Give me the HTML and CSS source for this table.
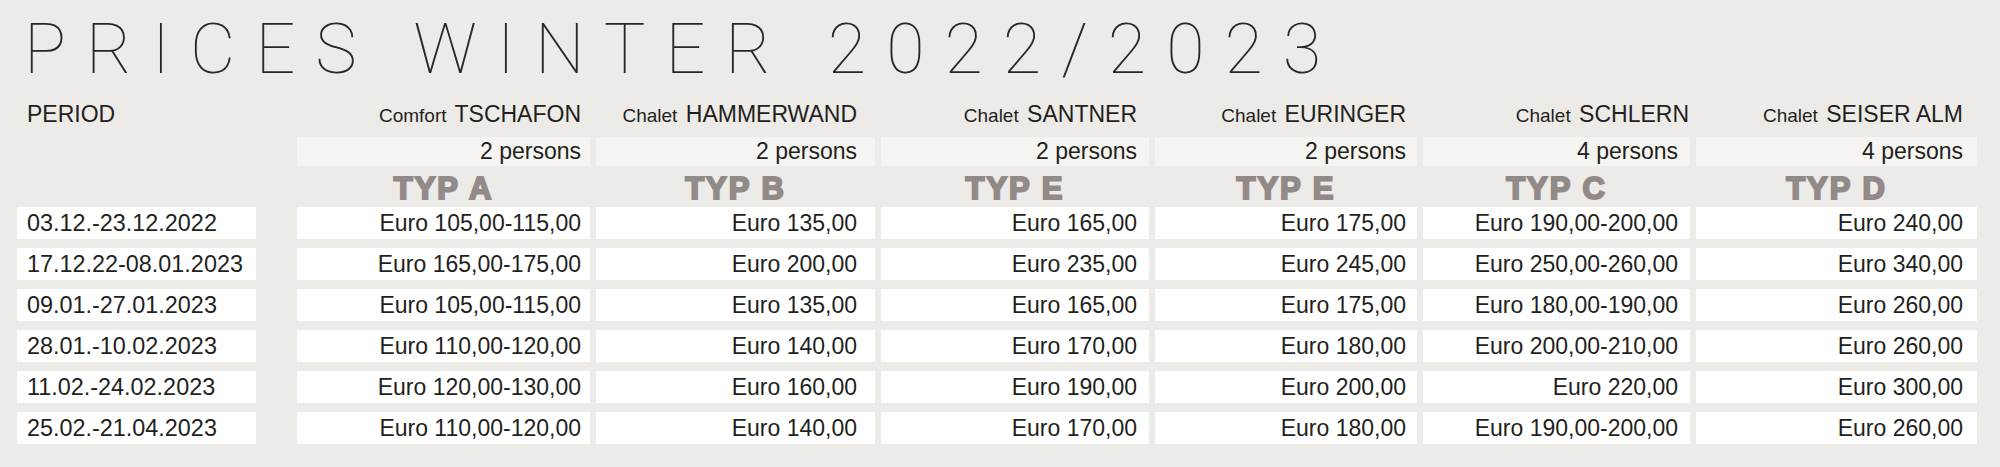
FILE: index.html
```html
<!DOCTYPE html>
<html lang="en">
<head>
<meta charset="utf-8">
<title>Prices Winter 2022/2023</title>
<link rel="stylesheet" href="styles.css">
</head>
<body>
<div class="sheet">
  <h1 class="title">PRICES WINTER 2022/2023</h1>

  <div class="row names">
    <div class="period-label">PERIOD</div>
    <div class="name ca"><span class="kind">Comfort</span> TSCHAFON</div>
    <div class="name cb"><span class="kind">Chalet</span> HAMMERWAND</div>
    <div class="name ce1"><span class="kind">Chalet</span> SANTNER</div>
    <div class="name ce2"><span class="kind">Chalet</span> EURINGER</div>
    <div class="name cc name-flush"><span class="kind">Chalet</span> SCHLERN</div>
    <div class="name cd"><span class="kind">Chalet</span> SEISER ALM</div>
  </div>

  <div class="row persons">
    <div class="blank"></div>
    <div class="pcell ca">2 persons</div>
    <div class="pcell cb">2 persons</div>
    <div class="pcell ce1">2 persons</div>
    <div class="pcell ce2">2 persons</div>
    <div class="pcell cc">4 persons</div>
    <div class="pcell cd">4 persons</div>
  </div>

  <div class="row types">
    <div class="blank"></div>
    <div class="typ">TYP A</div>
    <div class="typ">TYP B</div>
    <div class="typ">TYP E</div>
    <div class="typ">TYP E</div>
    <div class="typ">TYP C</div>
    <div class="typ">TYP D</div>
  </div>

  <div class="data">
    <div class="row line">
      <div class="date">03.12.-23.12.2022</div>
      <div class="price ca">Euro 105,00-115,00</div>
      <div class="price cb">Euro 135,00</div>
      <div class="price ce1">Euro 165,00</div>
      <div class="price ce2">Euro 175,00</div>
      <div class="price cc">Euro 190,00-200,00</div>
      <div class="price cd">Euro 240,00</div>
    </div>
    <div class="row line">
      <div class="date">17.12.22-08.01.2023</div>
      <div class="price ca">Euro 165,00-175,00</div>
      <div class="price cb">Euro 200,00</div>
      <div class="price ce1">Euro 235,00</div>
      <div class="price ce2">Euro 245,00</div>
      <div class="price cc">Euro 250,00-260,00</div>
      <div class="price cd">Euro 340,00</div>
    </div>
    <div class="row line">
      <div class="date">09.01.-27.01.2023</div>
      <div class="price ca">Euro 105,00-115,00</div>
      <div class="price cb">Euro 135,00</div>
      <div class="price ce1">Euro 165,00</div>
      <div class="price ce2">Euro 175,00</div>
      <div class="price cc">Euro 180,00-190,00</div>
      <div class="price cd">Euro 260,00</div>
    </div>
    <div class="row line">
      <div class="date">28.01.-10.02.2023</div>
      <div class="price ca">Euro 110,00-120,00</div>
      <div class="price cb">Euro 140,00</div>
      <div class="price ce1">Euro 170,00</div>
      <div class="price ce2">Euro 180,00</div>
      <div class="price cc">Euro 200,00-210,00</div>
      <div class="price cd">Euro 260,00</div>
    </div>
    <div class="row line">
      <div class="date">11.02.-24.02.2023</div>
      <div class="price ca">Euro 120,00-130,00</div>
      <div class="price cb">Euro 160,00</div>
      <div class="price ce1">Euro 190,00</div>
      <div class="price ce2">Euro 200,00</div>
      <div class="price cc">Euro 220,00</div>
      <div class="price cd">Euro 300,00</div>
    </div>
    <div class="row line">
      <div class="date">25.02.-21.04.2023</div>
      <div class="price ca">Euro 110,00-120,00</div>
      <div class="price cb">Euro 140,00</div>
      <div class="price ce1">Euro 170,00</div>
      <div class="price ce2">Euro 180,00</div>
      <div class="price cc">Euro 190,00-200,00</div>
      <div class="price cd">Euro 260,00</div>
    </div>
  </div>
</div>
</body>
</html>
```

FILE: styles.css
```css
html, body {
  margin: 0;
  padding: 0;
  background: #edebe7;
}

body {
  font-family: "Liberation Sans", Arial, sans-serif;
  color: #231f20;
  width: 2000px;
  height: 467px;
  overflow: hidden;
}

.sheet {
  padding: 14px 0 0 17px;
}

.title {
  margin: 0 0 16px 7px;
  font-family: Roboto, "Noto Sans", sans-serif;
  font-weight: 100;
  font-size: 70px;
  line-height: 70px;
  letter-spacing: 20px;
  color: #2a2526;
  white-space: nowrap;
}

.row {
  display: grid;
  grid-template-columns: 274px 293px 279px 268px 262px 267px 281px;
  column-gap: 6px;
}

.ca { --pr: 9px; }
.cb { --pr: 18px; }
.ce1 { --pr: 12px; }
.ce2 { --pr: 11px; }
.cc { --pr: 12px; }
.cd { --pr: 14px; }

.names {
  height: 29px;
  line-height: 29px;
  font-size: 23px;
  margin-bottom: 8px;
}

.period-label {
  padding-left: 10px;
}

.name {
  text-align: right;
  padding-right: var(--pr);
  white-space: nowrap;
}

.name-flush {
  padding-right: 1px;
}

.kind {
  font-size: 19px;
  margin-right: 2px;
}

.persons {
  height: 29px;
  line-height: 29px;
  font-size: 23px;
}

.pcell {
  background: #f5f4f1;
  text-align: right;
  padding-right: var(--pr);
}

.types {
  height: 36px;
  padding-top: 5px;
}

.typ {
  font-family: "Liberation Sans", Arial, sans-serif;
  font-weight: bold;
  font-size: 31px;
  line-height: 36px;
  letter-spacing: 2px;
  color: #928a88;
  -webkit-text-stroke: 2px #928a88;
  text-align: center;
  white-space: nowrap;
}

.data {
  display: flex;
  flex-direction: column;
  gap: 9px;
}

.line {
  height: 32px;
  line-height: 32px;
  font-size: 23px;
}

.date {
  width: 229px;
  background: #fff;
  padding-left: 10px;
  font-size: 23.4px;
  white-space: nowrap;
}

.price {
  background: #fff;
  text-align: right;
  padding-right: var(--pr);
  white-space: nowrap;
}
```
